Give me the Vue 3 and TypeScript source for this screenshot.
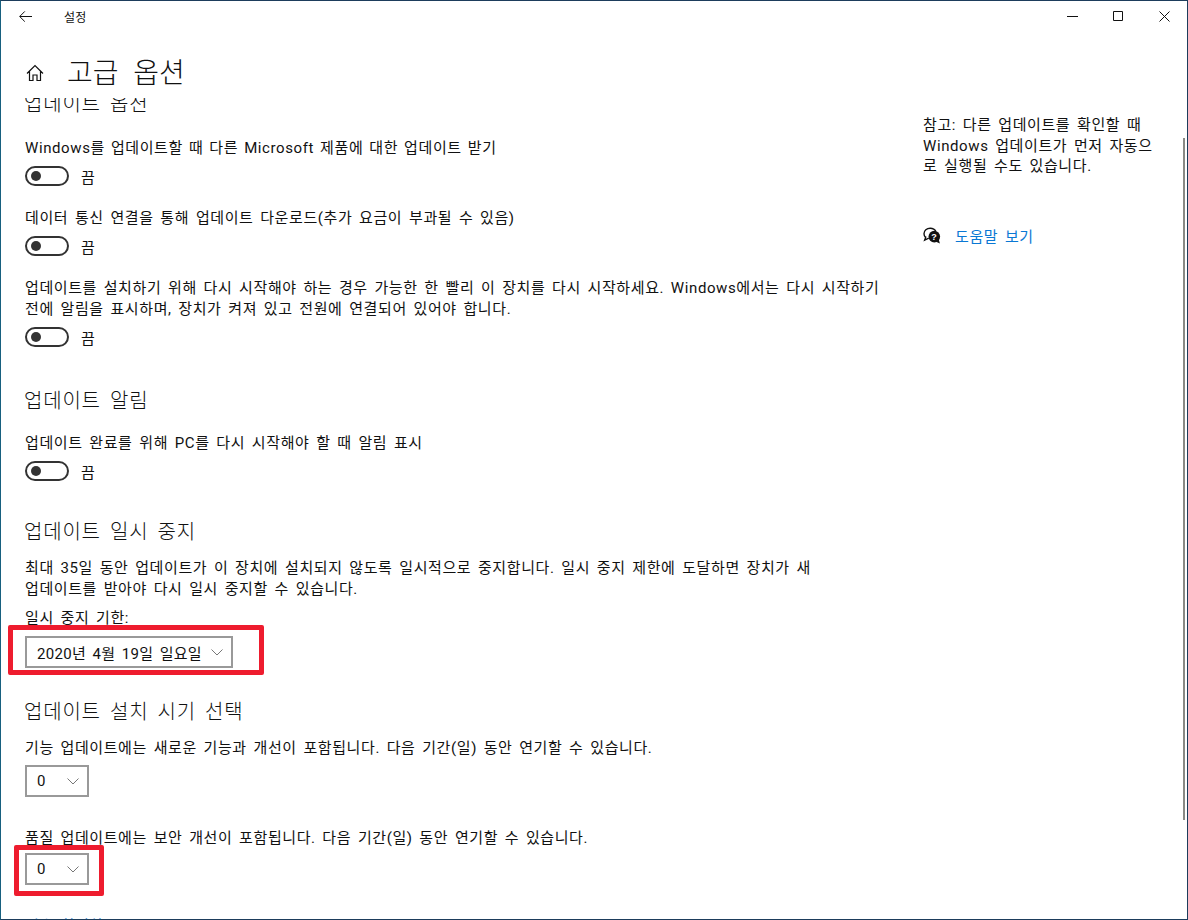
<script setup lang="ts">
interface ToggleRow {
  lines: string[]
}

const updateRows: ToggleRow[] = [
  { lines: ['Windows를 업데이트할 때 다른 Microsoft 제품에 대한 업데이트 받기'] },
  { lines: ['데이터 통신 연결을 통해 업데이트 다운로드(추가 요금이 부과될 수 있음)'] },
  {
    lines: [
      '업데이트를 설치하기 위해 다시 시작해야 하는 경우 가능한 한 빨리 이 장치를 다시 시작하세요. Windows에서는 다시 시작하기',
      '전에 알림을 표시하며, 장치가 켜져 있고 전원에 연결되어 있어야 합니다.',
    ],
  },
]
</script>

<template>
  <div class="window">
    <header class="titlebar">
      <svg class="back" width="13" height="11" viewBox="0 0 13 11" fill="none" stroke="#111" stroke-width="1">
        <path d="M.8 5.5H13M5.8.4.7 5.5l5.1 5.1" />
      </svg>
      <span class="app-title">설정</span>
      <div class="win-controls">
        <svg width="11" height="11" viewBox="0 0 11 11" fill="none" stroke="#111"><path d="M0 5.5h11" /></svg>
        <svg width="11" height="11" viewBox="0 0 11 11" fill="none" stroke="#111"><path d="M.5.5h9v9h-9z" /></svg>
        <svg width="11" height="11" viewBox="0 0 11 11" fill="none" stroke="#111"><path d="M.5.5l10 10M10.5.5l-10 10" /></svg>
      </div>
    </header>

    <div class="page-head">
      <svg class="home" width="18" height="18" viewBox="0 0 18 18" fill="none" stroke="#111" stroke-width="1.2">
        <path d="M1 9.5 9 1.5l8 8M3.5 7.5V16.5h3.5v-5.5h4v5.5h3.5V7.5" />
      </svg>
      <h1>고급 옵션</h1>
    </div>

    <div class="body">
      <main class="content">
        <h2 class="clipped-head">업데이트 옵션</h2>

        <section v-for="row in updateRows" :key="row.lines[0]" class="toggle-row">
          <p v-for="line in row.lines" :key="line">{{ line }}</p>
          <div class="toggle">
            <span class="switch"><i /></span>
            <span>끔</span>
          </div>
        </section>

        <h2 class="head-notify">업데이트 알림</h2>
        <section class="toggle-row">
          <p>업데이트 완료를 위해 PC를 다시 시작해야 할 때 알림 표시</p>
          <div class="toggle">
            <span class="switch"><i /></span>
            <span>끔</span>
          </div>
        </section>

        <h2 class="head-pause">업데이트 일시 중지</h2>
        <p>최대 35일 동안 업데이트가 이 장치에 설치되지 않도록 일시적으로 중지합니다. 일시 중지 제한에 도달하면 장치가 새</p>
        <p>업데이트를 받아야 다시 일시 중지할 수 있습니다.</p>
        <p class="pause-label">일시 중지 기한:</p>
        <div class="marked marked-date">
          <div class="select select-date">
            <span>2020년 4월 19일 일요일</span>
            <svg width="12" height="7" viewBox="0 0 12 7" fill="none" stroke="#777"><path d="M.5.5 6 6l5.5-5.5" /></svg>
          </div>
        </div>

        <h2 class="head-when">업데이트 설치 시기 선택</h2>
        <p class="when-text">기능 업데이트에는 새로운 기능과 개선이 포함됩니다. 다음 기간(일) 동안 연기할 수 있습니다.</p>
        <div class="select select-num">
          <span>0</span>
          <svg width="12" height="7" viewBox="0 0 12 7" fill="none" stroke="#777"><path d="M.5.5 6 6l5.5-5.5" /></svg>
        </div>
        <p class="quality-text">품질 업데이트에는 보안 개선이 포함됩니다. 다음 기간(일) 동안 연기할 수 있습니다.</p>
        <div class="marked marked-num">
          <div class="select select-num">
            <span>0</span>
            <svg width="12" height="7" viewBox="0 0 12 7" fill="none" stroke="#777"><path d="M.5.5 6 6l5.5-5.5" /></svg>
          </div>
        </div>
        <a class="cut-link">전송 최적화</a>
      </main>

      <aside class="side">
        <p>참고: 다른 업데이트를 확인할 때</p>
        <p>Windows 업데이트가 먼저 자동으</p>
        <p>로 실행될 수도 있습니다.</p>
        <div class="help">
          <svg width="18" height="17" viewBox="0 0 18 17">
            <path d="M2.6 10.5C1.5 9.5 1 8.2 1 6.8 1 3.6 3.8 1.2 7.2 1.2c2.6 0 4.7 1.2 5.6 3.1" fill="none" stroke="#111" stroke-width="1.4" />
            <path d="M3 9.6 1.6 13.2l4.2-2" fill="none" stroke="#111" stroke-width="1.3" />
            <circle cx="11.3" cy="9.6" r="5.8" fill="#111" />
            <path d="M12.5 14.5l4.4 2-1.3-4.4z" fill="#111" />
            <text x="11.3" y="12.8" font-size="9" font-weight="700" fill="#fff" text-anchor="middle" font-family="Liberation Sans, sans-serif">?</text>
          </svg>
          <a>도움말 보기</a>
        </div>
      </aside>
      <div class="scrollbar" />
    </div>
  </div>
</template>

<style scoped>
.window {
  box-sizing: border-box;
  width: 1188px;
  height: 920px;
  overflow: hidden;
  position: relative;
  display: flex;
  flex-direction: column;
  background: #fff;
  border: 1px solid #1d3d5c;
  border-left-color: #17607f;
  font-family: Roboto, "Noto Sans CJK KR", sans-serif;
  font-size: 15px;
  letter-spacing: 0.6px;
  word-spacing: 2.4px;
  color: #111;
}

p {
  margin: 0;
  height: 21px;
  line-height: 24px;
  white-space: nowrap;
}

h1,
h2 {
  margin: 0;
  font-weight: 300;
  white-space: nowrap;
}

.titlebar {
  flex: none;
  height: 31px;
  display: flex;
  align-items: center;
  padding-left: 18px;
}

.app-title {
  margin-left: 32px;
  font-size: 12px;
  letter-spacing: 0.3px;
}

.win-controls {
  margin-left: auto;
  margin-right: 17px;
  display: flex;
  gap: 35px;
}

.page-head {
  flex: none;
  box-sizing: border-box;
  height: 64px;
  padding: 14px 0 0 25px;
  display: flex;
  align-items: center;
  gap: 23px;
}

.home {
  margin-top: 4px;
}

h1 {
  font-size: 28px;
  line-height: 40px;
  letter-spacing: 0;
  word-spacing: 8px;
  padding-top: 6px;
}

.body {
  flex: 1;
  min-height: 0;
  display: flex;
  position: relative;
}

.content {
  width: 898px;
  flex: none;
  overflow: hidden;
  box-sizing: border-box;
  margin-top: 2px;
  padding-left: 24px;
}

h2 {
  font-size: 20px;
  line-height: 32px;
  height: 28px;
  letter-spacing: 0.8px;
  word-spacing: 3.5px;
  margin-left: -1px;
}

.clipped-head {
  margin-top: -10px;
  margin-bottom: 20px;
}

.toggle-row {
  margin-bottom: 14px;
}

.toggle-row:first-of-type p {
  word-spacing: 1.7px;
}

.toggle {
  display: flex;
  align-items: center;
  gap: 12px;
  height: 32px;
  margin-top: 3px;
}

.switch {
  box-sizing: border-box;
  width: 44px;
  height: 20px;
  border: 2px solid #333;
  border-radius: 10px;
  display: flex;
  align-items: center;
  padding-left: 4px;
}

.switch i {
  width: 10px;
  height: 10px;
  border-radius: 50%;
  background: #333;
}

.head-notify {
  margin-top: 32px;
  margin-bottom: 18px;
}

.head-pause {
  margin-top: 29px;
  margin-bottom: 12px;
}

.pause-label {
  margin-top: 8px;
}

.marked {
  box-sizing: border-box;
  display: flex;
  align-items: flex-start;
  border: 5px solid #ee1c2e;
  border-radius: 2px;
}

.marked-date {
  width: 256px;
  height: 50px;
  margin: -2px 0 0 -17px;
  padding: 6px 0 0 12px;
}

.marked-num {
  width: 90px;
  height: 51px;
  margin: -2px 0 0 -11px;
  padding: 3px 0 0 6px;
}

.select {
  box-sizing: border-box;
  height: 32px;
  border: 2px solid #999;
  display: flex;
  align-items: center;
  justify-content: space-between;
  padding: 0 8px 0 10px;
  background: #fff;
}

.select-date {
  width: 208px;
  letter-spacing: 0.3px;
}

.select-num {
  width: 64px;
}

.head-when {
  margin-top: 21px;
  margin-bottom: 12px;
}

.when-text {
  margin-bottom: 8px;
}

.quality-text {
  margin-top: 29px;
}

.cut-link {
  display: block;
  margin-top: 20px;
  color: #0a78d4;
  line-height: 21px;
}

.side {
  width: 232px;
  padding-top: 17px;
  padding-left: 24px;
}

.side p {
  height: 20.5px;
  line-height: 24px;
}

.help {
  display: flex;
  align-items: center;
  gap: 14px;
  margin-top: 50px;
}

.help a {
  color: #0a78d4;
}

.scrollbar {
  position: absolute;
  right: 2px;
  top: 42px;
  height: 682px;
  width: 2px;
  background: #8a8a86;
}
</style>

<style>
html,
body {
  margin: 0;
  background: #fff;
}
</style>
